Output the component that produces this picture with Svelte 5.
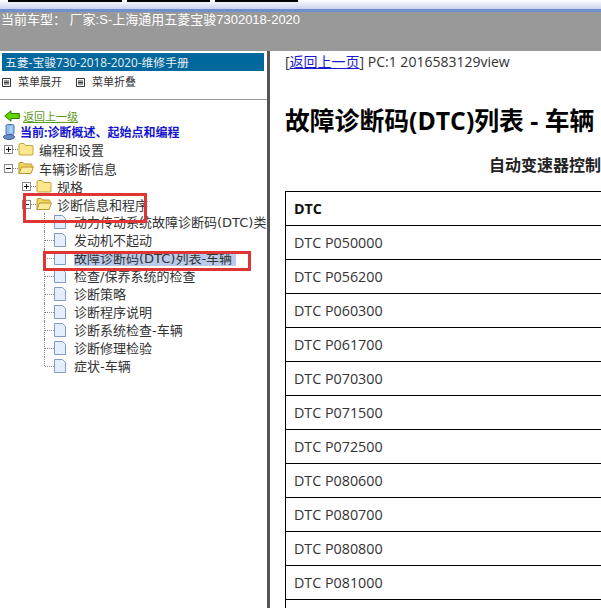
<script>
  const tree = [
    { label: "编程和设置", depth: 0, open: false },
    { label: "车辆诊断信息", depth: 0, open: true },
    { label: "规格", depth: 1, open: false },
    { label: "诊断信息和程序", depth: 1, open: true }
  ];
  const docs = [
    "动力传动系统故障诊断码(DTC)类",
    "发动机不起动",
    "故障诊断码(DTC)列表-车辆",
    "检查/保养系统的检查",
    "诊断策略",
    "诊断程序说明",
    "诊断系统检查-车辆",
    "诊断修理检验",
    "症状-车辆"
  ];
  const codes = ["P050000", "P056200", "P060300", "P061700", "P070300", "P071500", "P072500", "P080600", "P080700", "P080800", "P081000"];
</script>

<div class="page">
  <div class="tabs">
    <span class="tab t1"></span>
    <span class="tab t2"></span>
    <span class="tab t3"></span>
  </div>
  <header class="head">当前车型： 厂家:S-上海通用五菱宝骏7302018-2020</header>
  <div class="split">
    <aside class="side">
      <div class="manual">五菱-宝骏730-2018-2020-维修手册</div>
      <div class="menu">
        <span class="m"><svg class="mi" width="9" height="9" viewBox="0 0 9 9"><path d="M.5.5h8v8h-8zM2 3h5M2 4.5h5M2 6h5" fill="none" stroke="#333"/></svg>菜单展开</span>
        <span class="m"><svg class="mi" width="9" height="9" viewBox="0 0 9 9"><path d="M.5.5h8v8h-8zM2 3h5M2 4.5h5M2 6h5" fill="none" stroke="#333"/></svg>菜单折叠</span>
      </div>
      <div class="tree">
        <a class="back" href="#top">
          <svg width="16" height="12" viewBox="0 0 16 12"><path d="M.7 6 7 .8v2.7h8.300v5H7v2.700z" fill="#62d400" stroke="#2f7a00"/></svg>
          返回上一级
        </a>
        <div class="cur">
          <svg width="13" height="16" viewBox="0 0 13 16"><rect x="3" y=".5" width="8" height="10" rx="1.500" fill="#8fc0f4" stroke="#4a70b0"/><path d="M8 2.500v6" stroke="#dcecff"/><ellipse cx="6" cy="13" rx="5.500" ry="2.500" fill="#6a88c8" stroke="#3f5f9f"/></svg>
          当前:诊断概述、起始点和编程
        </div>
        {#each tree as n}
          <div class="row" class:d1={n.depth === 1}>
            <svg class="box" width="9" height="9" viewBox="0 0 9 9"><rect x=".5" y=".5" width="8" height="8" fill="#fff" stroke="#888"/><path d={n.open ? "M2 4.500h5" : "M2 4.500h5M4.500 2v5"} stroke="#111"/></svg>
            <span class="dots"></span>
            {#if n.open}
              <svg class="folder" width="16" height="14" viewBox="0 0 16 14"><path d="M1 12.500V2.500a1 1 0 0 1 1-1h3l1.500 1.500H13a1 1 0 0 1 1 1V6" fill="#f4d65e" stroke="#b8962e"/><path d="M1 12.500 3.500 6H15.500L13 12.500z" fill="#fbeb9c" stroke="#b8962e"/></svg>
            {:else}
              <svg class="folder" width="16" height="14" viewBox="0 0 16 14"><path d="M1 12a1 1 0 0 0 1 1h12a1 1 0 0 0 1-1V4.500a1 1 0 0 0-1-1H7.500L6 1.500H2.500a1.500 1.500 0 0 0-1.500 1.500z" fill="#fbe88c" stroke="#c4a33a"/></svg>
            {/if}
            <span>{n.label}</span>
          </div>
        {/each}
        {#each docs as d, i}
          <div class="row doc">
            <span class="vline" class:last={i === docs.length - 1}></span>
            <span class="dots"></span>
            <svg class="sheet" width="12" height="14" viewBox="0 0 12 14"><path d="M.5.5h8l3 3v10H.5z" fill="#e4eefc" stroke="#7f9cc6"/></svg>
            <span class="label" class:sel={i === 2}>{d}</span>
          </div>
        {/each}
      </div>
      <span class="mark mark1"></span>
      <span class="mark mark2"></span>
    </aside>
    <main class="content">
      <p class="nav">[<a href="#top">返回上一页</a>] PC:1 2016583129view</p>
      <h1>故障诊断码(DTC)列表 - 车辆</h1>
      <h2>自动变速器控制</h2>
      <table>
        <tbody>
          <tr><th>DTC</th></tr>
          {#each codes as c}
            <tr><td>DTC {c}</td></tr>
          {/each}
          <tr><td></td></tr>
        </tbody>
      </table>
    </main>
  </div>
</div>

<style>
  :global(body) {
    margin: 0;
    overflow: hidden;
    background: #fff;
  }
  .page {
    width: 601px;
    height: 608px;
    overflow: hidden;
    font-family: "Open Sans", "Noto Sans CJK SC", sans-serif;
    color: #333;
  }
  .tabs {
    height: 9px;
    display: flex;
    gap: 5px;
    padding-left: 8px;
    background: linear-gradient(#fff, #c6d3ee);
    border-bottom: 3px solid #6f8fd0;
  }
  .tab {
    height: 2px;
    background: #000;
  }
  .t1 { width: 114px; }
  .t2 { width: 83px; }
  .t3 { width: 83px; }
  .head {
    height: 39px;
    background: #999;
    color: #fff;
    font-family: "Liberation Sans", "Noto Sans CJK SC", sans-serif;
    font-size: 13px;
    line-height: 15px;
    padding-left: 1px;
    white-space: nowrap;
  }
  .split {
    display: flex;
    height: 557px;
  }
  .side {
    position: relative;
    width: 267px;
    flex: none;
    border-right: 3px solid #555;
    font-size: 13px;
  }
  .manual {
    margin: 2px 3px 0 2px;
    height: 18px;
    line-height: 18px;
    background: #00689c;
    color: #eee;
    font-size: 11.8px;
    padding-left: 3px;
    white-space: nowrap;
  }
  .menu {
    display: flex;
    gap: 14px;
    height: 29px;
    padding: 3px 0 0 2px;
    box-sizing: border-box;
    font-size: 11px;
    line-height: 16px;
    border-bottom: 1px solid #999;
  }
  .m {
    display: flex;
    align-items: center;
    gap: 7px;
    height: 16px;
  }
  .mi { flex: none; }
  .tree {
    padding-top: 8px;
  }
  .back {
    display: flex;
    align-items: center;
    gap: 3px;
    height: 16px;
    padding-left: 4px;
    color: #5a9a1a;
    font-size: 11px;
  }
  .cur {
    display: flex;
    align-items: center;
    gap: 4px;
    height: 16px;
    padding-left: 3px;
    color: #1414d0;
    font-size: 12px;
    font-weight: bold;
    white-space: nowrap;
  }
  .row {
    display: flex;
    align-items: center;
    height: 18px;
    padding-left: 4px;
    font-family: "DejaVu Sans", "Noto Sans CJK SC", sans-serif;
    white-space: nowrap;
  }
  .row.d1 { padding-left: 22px; }
  .row:nth-child(4) { margin-top: 1px; }
  .dots {
    width: 5px;
    border-top: 1px dotted #888;
    flex: none;
  }
  .box { flex: none; }
  .folder {
    flex: none;
    margin: 0 5px 0 0;
  }
  .row.doc {
    padding-left: 44px;
    overflow: hidden;
  }
  .vline {
    flex: none;
    align-self: stretch;
    border-left: 1px dotted #888;
  }
  .vline.last {
    align-self: flex-start;
    height: 9px;
  }
  .doc .dots { width: 9px; }
  .sheet {
    flex: none;
    margin: 0 8px 0 0;
  }
  .label {
    display: block;
    height: 15px;
    line-height: 15px;
    padding-right: 4px;
  }
  .sel { background: #b9cbe8; }
  .mark {
    position: absolute;
    border: 3px solid #e03535;
    box-sizing: border-box;
  }
  .mark1 {
    left: 23px;
    top: 142px;
    width: 124px;
    height: 30px;
  }
  .mark2 {
    left: 43px;
    top: 200px;
    width: 208px;
    height: 20px;
  }
  .content {
    flex: 1;
    min-width: 0;
    padding: 2px 0 0 15px;
    overflow: hidden;
  }
  .nav {
    margin: 0;
    font-size: 14px;
    line-height: 18px;
    white-space: nowrap;
  }
  .nav a { color: #1a1ad0; }
  h1 {
    margin: 33px 0 0;
    font-size: 24.8px;
    line-height: 32px;
    color: #000;
    white-space: nowrap;
  }
  h2 {
    margin: 18px 0 0 204px;
    font-size: 16px;
    line-height: 22px;
    font-weight: bold;
    white-space: nowrap;
    color: #222;
  }
  table {
    margin-top: 15px;
    width: 500px;
    border-collapse: collapse;
    table-layout: fixed;
  }
  th, td {
    border: 1px solid #000;
    height: 33px;
    padding: 0 8px;
    font-size: 14.3px;
    text-align: left;
  }
  th { color: #111; }
</style>
